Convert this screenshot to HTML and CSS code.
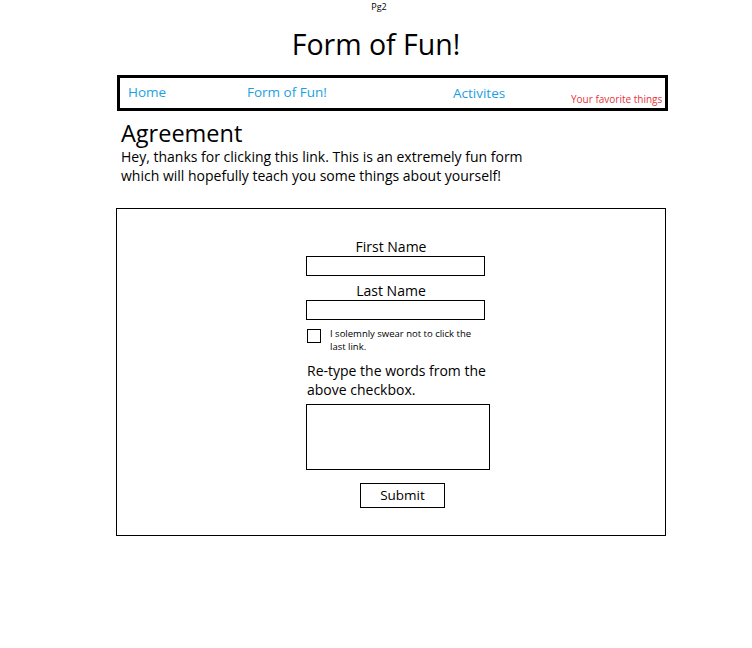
FILE: index.html
```html
<!DOCTYPE html>
<html lang="en">
<head>
    <meta charset="UTF-8">
    <meta name="viewport" content="width=device-width, initial-scale=1.0">
    <title>Form of Fun!</title>
    <link rel="stylesheet" href="styles.css">
</head>
<body>

    <!-- Header -->
    <div class="page-tag">Pg2</div>
    <h1 class="title">Form of Fun!</h1>

    <!-- Navbar -->
    <div class="navbar">
        <a href="#" class="nav-home">Home</a>
        <a href="#" class="nav-form">Form of Fun!</a>
        <a href="#" class="nav-act">Activites</a>
        <span class="nav-note">Your favorite things</span>
    </div>

    <!-- Intro -->
    <div class="intro">
        <h2>Agreement</h2>
        <p>Hey, thanks for clicking this link. This is an extremely fun form<br>which will hopefully teach you some things about yourself!</p>
    </div>

    <!-- Form -->
    <div class="form-box">
        <form class="fun-form">
            <label for="firstName" class="center-label">First Name</label>
            <input type="text" id="firstName" name="firstName">

            <label for="lastName" class="center-label">Last Name</label>
            <input type="text" id="lastName" name="lastName">

            <div class="swear">
                <input type="checkbox" id="swear" name="swear">
                <label for="swear">I solemnly swear not to click the last link.</label>
            </div>

            <label for="retype" class="retype-label">Re-type the words from the above checkbox.</label>
            <textarea id="retype" name="retype"></textarea>

            <button type="button">Submit</button>
        </form>
    </div>

</body>
</html>
```

FILE: styles.css
```css
body {
    font-family: "Open Sans", sans-serif;
    margin: 0;
    padding: 0;
    background-color: #fff;
    color: #000;
    width: 752px;
}

.page-tag {
    text-align: center;
    font-size: 9px;
    line-height: 12px;
    padding-top: 1px;
    padding-left: 6px;
}

.title {
    text-align: center;
    font-weight: normal;
    font-size: 28.5px;
    line-height: 36px;
    margin: 13px 0 13px;
}

.navbar {
    box-sizing: border-box;
    margin-left: 117px;
    width: 551px;
    height: 36px;
    border: 3px solid #000;
    display: flex;
    align-items: flex-start;
    padding-left: 8px;
}

.navbar a {
    display: block;
    color: #1ba1e2;
    text-decoration: none;
    font-size: 13.5px;
    line-height: 18px;
    padding-top: 5px;
}

.nav-home {
    width: 119px;
}

.nav-form {
    width: 206px;
}

.navbar .nav-act {
    width: 118px;
    padding-top: 6px;
}

.nav-note {
    color: #e8323c;
    font-size: 10px;
    line-height: 12px;
    padding-top: 15px;
}

.intro {
    margin-left: 121px;
    margin-top: 8px;
}

.intro h2 {
    font-weight: normal;
    font-size: 23.5px;
    line-height: 28px;
    margin: 0;
}

.intro p {
    font-size: 14px;
    line-height: 19px;
    margin: 0;
}

.form-box {
    margin-left: 116px;
    margin-top: 23px;
    width: 548px;
    height: 326px;
    border: 1px solid #000;
}

.fun-form {
    width: 184px;
    margin-left: 189px;
    padding-top: 29px;
    display: flex;
    flex-direction: column;
}

.center-label {
    width: 170px;
    text-align: center;
    font-size: 14px;
    line-height: 18px;
}

input[type="text"] {
    width: 179px;
    height: 20px;
    box-sizing: border-box;
    border: 1px solid #000;
    border-radius: 0;
    margin: 0 0 6px;
    padding: 0;
}

.swear {
    display: flex;
    align-items: flex-start;
    margin-top: 1px;
}

.swear input {
    appearance: none;
    width: 14px;
    height: 14px;
    border: 1px solid #000;
    margin: 2px 9px 0 1px;
    flex-shrink: 0;
}

.swear label {
    font-size: 9.5px;
    line-height: 13px;
    width: 158px;
}

.retype-label {
    font-size: 14px;
    line-height: 19px;
    margin-top: 8px;
    padding-left: 1px;
}

textarea {
    width: 184px;
    height: 66px;
    box-sizing: border-box;
    border: 1px solid #000;
    border-radius: 0;
    margin-top: 5px;
    resize: none;
}

button {
    align-self: flex-start;
    margin-left: 54px;
    margin-top: 13px;
    width: 85px;
    height: 25px;
    background-color: #fff;
    border: 1px solid #000;
    border-radius: 0;
    font-family: "Open Sans", sans-serif;
    font-size: 13.5px;
    line-height: 20px;
    padding: 0 0 2px;
    cursor: pointer;
}
```
